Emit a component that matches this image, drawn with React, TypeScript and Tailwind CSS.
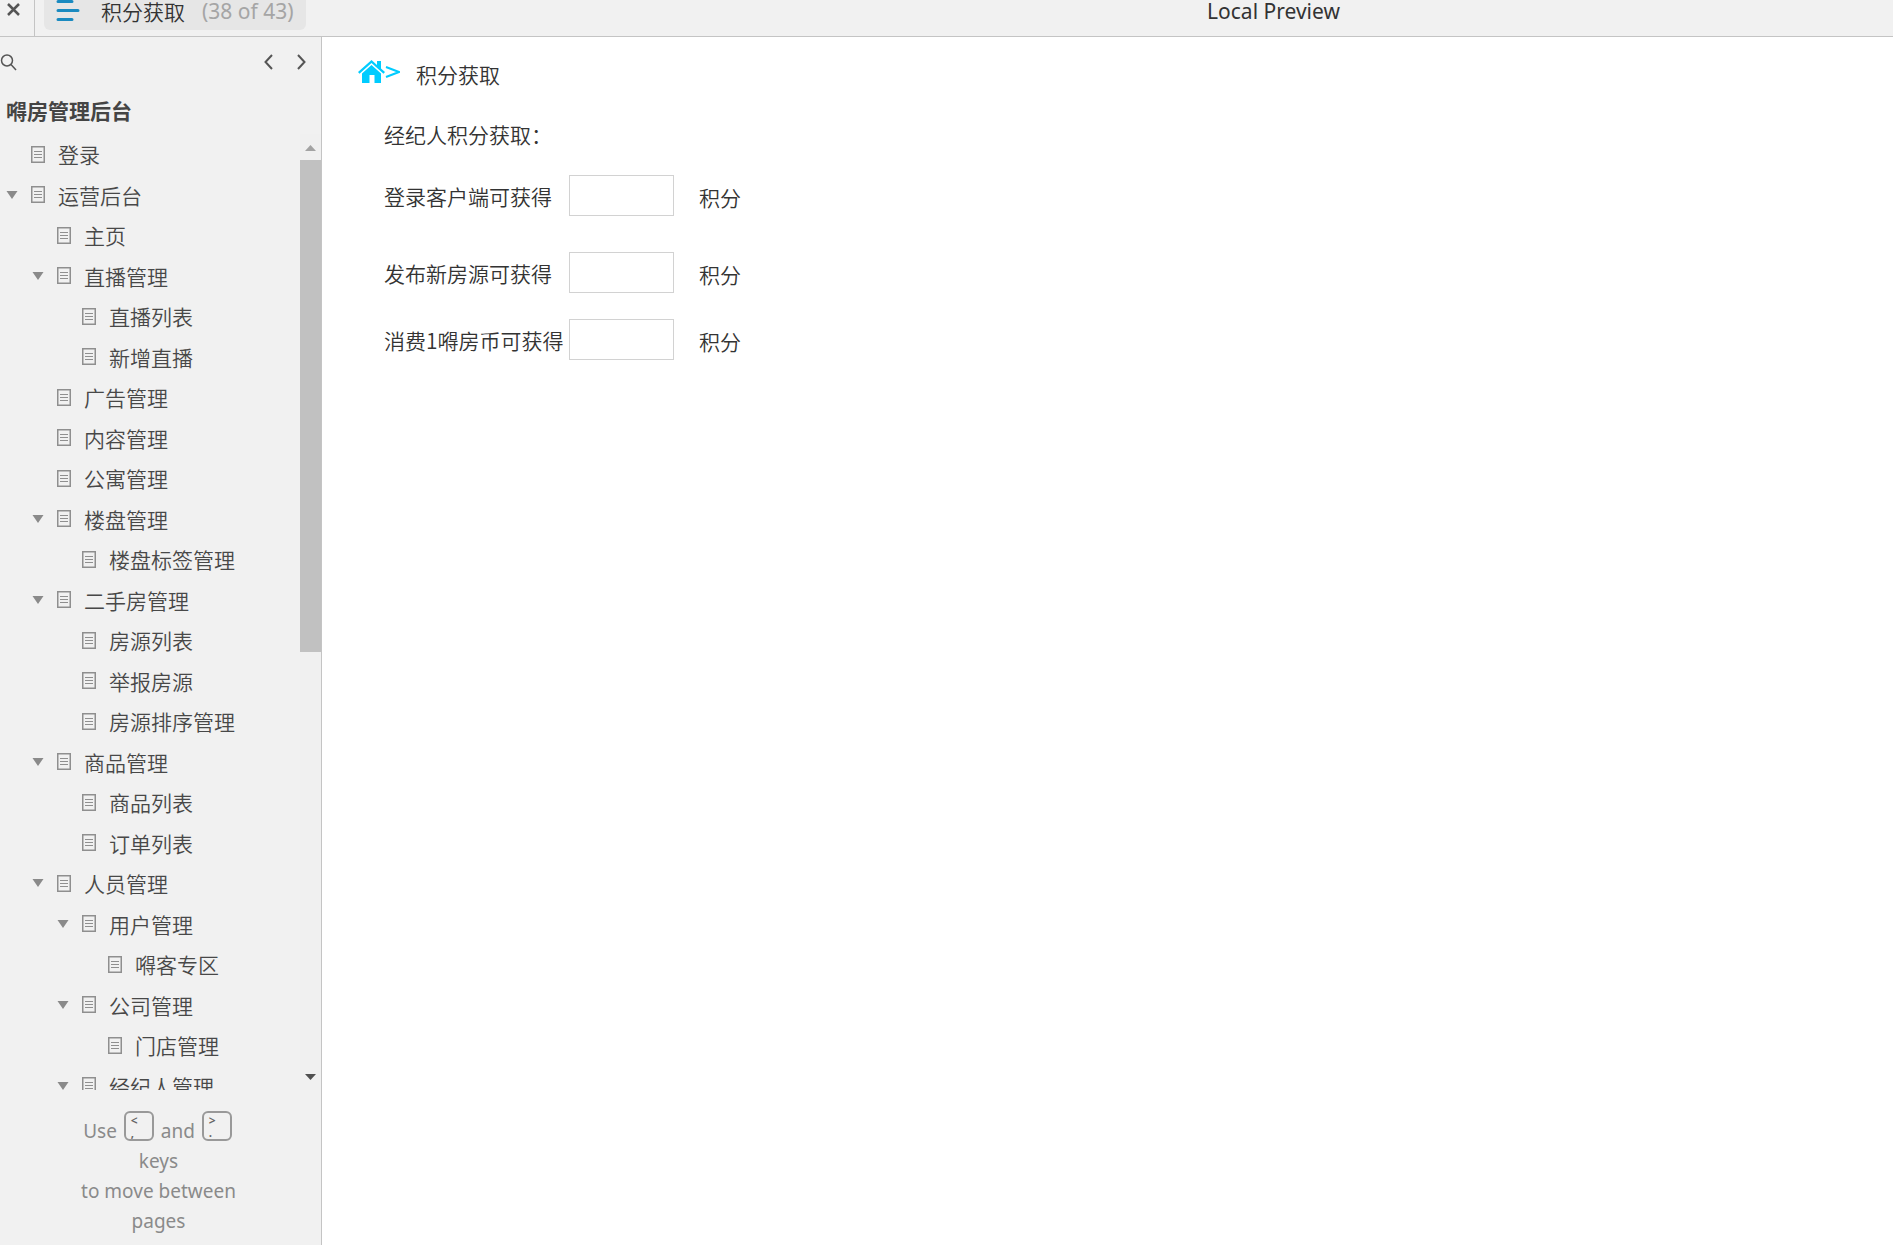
type Page = { name: string; level: number; open?: boolean };

const pages: Page[] = [
  { name: "登录", level: 0 },
  { name: "运营后台", level: 0, open: true },
  { name: "主页", level: 1 },
  { name: "直播管理", level: 1, open: true },
  { name: "直播列表", level: 2 },
  { name: "新增直播", level: 2 },
  { name: "广告管理", level: 1 },
  { name: "内容管理", level: 1 },
  { name: "公寓管理", level: 1 },
  { name: "楼盘管理", level: 1, open: true },
  { name: "楼盘标签管理", level: 2 },
  { name: "二手房管理", level: 1, open: true },
  { name: "房源列表", level: 2 },
  { name: "举报房源", level: 2 },
  { name: "房源排序管理", level: 2 },
  { name: "商品管理", level: 1, open: true },
  { name: "商品列表", level: 2 },
  { name: "订单列表", level: 2 },
  { name: "人员管理", level: 1, open: true },
  { name: "用户管理", level: 2, open: true },
  { name: "嘚客专区", level: 3 },
  { name: "公司管理", level: 2, open: true },
  { name: "门店管理", level: 3 },
  { name: "经纪人管理", level: 2, open: true },
];

const indent = ["pl-[6px]", "pl-[32px]", "pl-[57px]", "pl-[83px]"];

const PageIcon = () => (
  <svg width="14" height="17" viewBox="0 0 14 17" fill="none" stroke="#8f8f8f" className="ml-[13px] shrink-0">
    <rect x="0.75" y="0.75" width="12.5" height="15.5" strokeWidth="1.5" />
    <path d="M3 5.5h8M3 8.5h8M3 11.5h8" strokeWidth="1.2" />
  </svg>
);

const Key = ({ top, bottom }: { top: string; bottom: string }) => (
  <kbd className="mx-[2px] inline-block h-[30px] w-[30px] overflow-hidden rounded-md border-2 border-[#999] pl-[5px] pt-[2px] text-left align-[-3px] font-['Noto_Sans',sans-serif] text-[12px] leading-[12px] font-semibold text-[#666]">
    <span className="block">{top}</span>
    <span className="block">{bottom}</span>
  </kbd>
);

const Sidebar = () => (
  <aside className="flex w-[322px] shrink-0 flex-col border-r border-[#c4c4c4] bg-[#f1f1f1]">
    <div className="flex h-[50px] items-center justify-between pr-[15px]">
      <button aria-label="Search">
        <svg width="17" height="17" viewBox="0 0 17 17" fill="none" stroke="#555" strokeWidth="1.5">
          <circle cx="7" cy="6.5" r="5.5" />
          <path d="M11 10.5l5 5.5" />
        </svg>
      </button>
      <div className="flex gap-6">
        <button aria-label="Previous page">
          <svg width="9" height="16" viewBox="0 0 9 16" fill="none" stroke="#555" strokeWidth="2">
            <path d="M8 1L1.5 8L8 15" />
          </svg>
        </button>
        <button aria-label="Next page">
          <svg width="9" height="16" viewBox="0 0 9 16" fill="none" stroke="#555" strokeWidth="2">
            <path d="M1 1l6.5 7L1 15" />
          </svg>
        </button>
      </div>
    </div>
    <h2 className="h-[47px] pl-[6px] pt-2 text-[21px] leading-[30px] font-bold text-[#444]">嘚房管理后台</h2>
    <div className="flex min-h-0 flex-1">
      <ul className="min-w-0 flex-1 overflow-hidden text-[#484848]">
        {pages.map((page) => (
          <li key={page.name} className={`flex items-center odd:h-10 even:h-[41px] ${indent[page.level]}`}>
            <svg width="12" height="8" viewBox="0 0 12 8" className="shrink-0">
              {page.open && <path d="M0.5 0h11L6 8z" fill="#8a8a8a" />}
            </svg>
            <PageIcon />
            <a href="#" className="ml-[13px] whitespace-nowrap">{page.name}</a>
          </li>
        ))}
      </ul>
      <div className="flex w-[21px] flex-col items-center bg-[#f0f0f0] pb-[10px] pt-[11px]">
        <svg width="11" height="6" viewBox="0 0 11 6">
          <path d="M0 6L5.5 0L11 6z" fill="#a3a3a3" />
        </svg>
        <div className="mt-[9px] w-full basis-[492px] bg-[#c1c1c1]" />
        <svg width="11" height="6" viewBox="0 0 11 6" className="mt-auto">
          <path d="M0 0L5.5 6L11 0z" fill="#505050" />
        </svg>
      </div>
    </div>
    <p className="h-[155px] shrink-0 pl-[68px] pr-[72px] pt-[21px] text-center font-['Noto_Sans',sans-serif] text-[19px] leading-[30px] font-normal text-[#8a8a8a]">
      Use <Key top="<" bottom="," /> and <Key top=">" bottom="." /> keys
      <br />
      to move between pages
    </p>
  </aside>
);

const PointsField = ({ id, label }: { id: string; label: string }) => (
  <div className="flex items-center">
    <label htmlFor={id} className="w-[185px] whitespace-nowrap">{label}</label>
    <input id={id} className="h-[41px] w-[105px] border border-[#d2d2d2] bg-white px-2" />
    <span className="ml-[25px] pt-[2px]">积分</span>
  </div>
);

export default function App() {
  return (
    <div className="flex h-screen flex-col overflow-hidden bg-white font-['Noto_Sans_CJK_SC',sans-serif] text-[21px] leading-[30px] font-[350] text-[#333]">
      <header className="flex h-[37px] shrink-0 border-b border-[#c4c4c4] bg-[#f1f1f1]">
        <button aria-label="Close" className="flex w-[35px] justify-start border-r border-[#c4c4c4] pl-[7px] pt-[3px]">
          <svg width="13" height="13" viewBox="0 0 13 13" stroke="#555" strokeWidth="2.5">
            <path d="M1 1l11 11M12 1L1 12" />
          </svg>
        </button>
        <button className="ml-[9px] flex h-[30px] w-[262px] items-start whitespace-nowrap rounded-b-md bg-[#e6e6e6] pl-3 leading-[22px]">
          <svg width="24" height="22" viewBox="0 0 24 22" stroke="#1a8ac0" strokeWidth="3" strokeLinecap="round" className="shrink-0">
            <path d="M2 1.5h14M2 10.5h20M2 19.5h14" />
          </svg>
          <span className="ml-[21px]">积分获取</span>
          <span className="ml-[17px] font-['Noto_Sans',sans-serif] font-normal text-[#a5a5a5]">(38 of 43)</span>
        </button>
        <h1 className="flex-1 pl-[348px] text-center font-['Noto_Sans',sans-serif] leading-[22px] font-normal">Local Preview</h1>
      </header>
      <div className="flex min-h-0 flex-1">
        <Sidebar />
        <main className="flex-1 pl-9 pt-[18px]">
          <nav className="flex items-center">
            <a href="#" aria-label="首页">
              <svg width="42" height="24" viewBox="0 0 42 24" fill="#0cf">
                <path d="M0 12L13.5 0L19 5V1h4v7.5L27 12l-1.5 1.7L13.5 3L1.5 13.7z" />
                <path d="M13.5 5L23 13.5V23h-6.500v-8h-5v8H4V13.5z" />
                <path d="M28 7l13 5l-13 5" fill="none" stroke="#0cf" strokeWidth="2" />
              </svg>
            </a>
            <span className="ml-4 pt-1">积分获取</span>
          </nav>
          <form className="pl-[26px] pt-[30px]">
            <p>经纪人积分获取：</p>
            <div className="mt-[26px] flex flex-col">
              <PointsField id="login-points" label="登录客户端可获得" />
              <div className="mt-9">
                <PointsField id="house-points" label="发布新房源可获得" />
              </div>
              <div className="mt-[26px]">
                <PointsField id="coin-points" label="消费1嘚房币可获得" />
              </div>
            </div>
          </form>
        </main>
      </div>
    </div>
  );
}
